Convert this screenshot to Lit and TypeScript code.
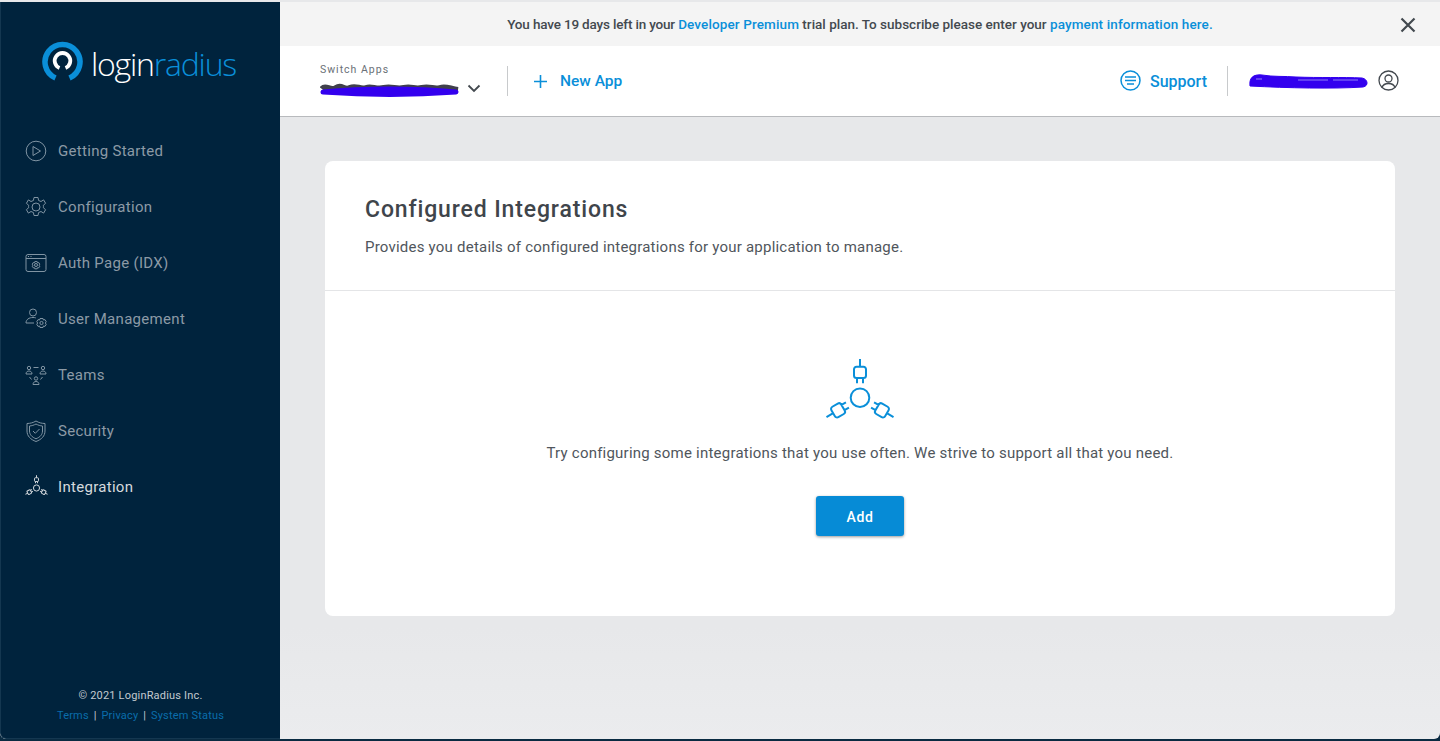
import { LitElement, html, css, svg } from "lit";
import { customElement } from "lit/decorators.js";

const plug = svg`<path d="M0-38.700V-31M-3.500-31h7a2.500 2.500 0 0 1 2.500 2.500v6.300a2.500 2.500 0 0 1-2.500 2.500h-7a2.500 2.500 0 0 1-2.500-2.500v-6.300a2.500 2.500 0 0 1 2.500-2.500zM-3-19.700v5.200M3-19.700v5.200"/>`;

const plugGroup = svg`
  <circle r="9.300"/>
  ${plug}
  <g transform="rotate(120)">${plug}</g>
  <g transform="rotate(240)">${plug}</g>
`;

const navIcons = {
  play: svg`<circle cx="11" cy="11" r="9.8"/><path d="M8 6.500v9l7.500-4.500z"/>`,
  gear: svg`<circle cx="11" cy="11" r="4"/><path d="M9 1.500h4l.6 3 2.400 1 2.600-1.600 2 3.400-2.300 2c.2.900.2 1.600 0 2.400l2.300 2-2 3.400-2.600-1.600-2.400 1-.6 3H9l-.6-3-2.400-1-2.600 1.600-2-3.400 2.300-2c-.2-.8-.2-1.500 0-2.400l-2.300-2 2-3.400L6 5.500l2.400-1z"/>`,
  auth: svg`<rect x="1" y="2.500" width="20" height="17" rx="2"/><path d="M1 6.500h20M3 4.500h1M5.500 4.500h1"/><circle cx="11" cy="13" r="1.500"/><path d="M9.800 9.600h2.400l.4 1.200 1.200-.2 1 1.600-.8 1 .8 1-1 1.600-1.200-.2-.4 1.200H9.800l-.4-1.200-1.200.2-1-1.600.8-1-.8-1 1-1.600 1.200.2z"/>`,
  user: svg`<circle cx="8" cy="4.500" r="3.500"/><path d="M1 15c0-3.500 3-5.500 7-5.500 1 0 2 .1 2.800.4M1 15h8"/><circle cx="16.500" cy="15" r="1.600"/><path d="M15 10.500h3l.4 1.500 1.600-.4 1.300 2.200-1.100 1.200 1.100 1.200-1.300 2.200-1.600-.4-.4 1.500h-3l-.4-1.500-1.600.4-1.300-2.200 1.100-1.200-1.100-1.200 1.300-2.200 1.600.4z"/>`,
  teams: svg`<circle cx="4" cy="4" r="1.700"/><path d="M1 10c0-2 1.300-3 3-3s3 1 3 3z"/><circle cx="18" cy="4" r="1.700"/><path d="M15 10c0-2 1.300-3 3-3s3 1 3 3z"/><circle cx="11" cy="14.500" r="1.700"/><path d="M8 20.500c0-2 1.300-3 3-3s3 1 3 3zM8.500 3.500h5M4.500 13l2 2.500M17.500 13l-2 2.500"/>`,
  shield: svg`<path d="M11 1c3 1.800 5.500 2.400 9 2.500V11c0 5-3.500 8.500-9 10.500C5.500 19.500 2 16 2 11V3.500C5.500 3.400 8 2.800 11 1z"/><path d="M11 4c2.200 1.200 4.200 1.800 6.500 2v5c0 3.600-2.500 6.200-6.500 7.800C7 17.200 4.500 14.600 4.500 11V6C6.800 5.800 8.800 5.200 11 4z"/><path d="M8 11l2.300 2.300L14.500 9"/>`,
  integration: svg`<g transform="translate(11.500 12) scale(.33)" stroke-width="3">${plugGroup}</g>`,
};

const navItems = [
  { label: "Getting Started", icon: navIcons.play },
  { label: "Configuration", icon: navIcons.gear },
  { label: "Auth Page (IDX)", icon: navIcons.auth },
  { label: "User Management", icon: navIcons.user },
  { label: "Teams", icon: navIcons.teams },
  { label: "Security", icon: navIcons.shield },
  { label: "Integration", icon: navIcons.integration, active: true },
];

@customElement("app-root")
export class AppRoot extends LitElement {
  static styles = css`
    :host {
      display: block;
      width: 1440px;
      height: 741px;
      overflow: hidden;
      background: #0a2b42;
      font-family: Roboto, "Liberation Sans", sans-serif;
      color: #3f454b;
    }
    .window {
      display: flex;
      height: 739px;
      overflow: hidden;
      background: linear-gradient(#e7e8ea 85%, #ebecee);
      border-radius: 0 0 6px 6px;
    }
    .sidebar {
      width: 280px;
      flex: none;
      box-sizing: border-box;
      margin-top: 2px;
      background: #00233d;
      border-left: 1px solid #143750;
      border-bottom: 1px solid #143750;
      border-bottom-left-radius: 6px;
      display: flex;
      flex-direction: column;
    }
    .logo {
      display: flex;
      align-items: center;
      height: 62px;
      margin: 29px 0 0 40px;
      gap: 7px;
    }
    .logo-text {
      padding-top: 3px;
      font-family: "Open Sans", sans-serif;
      font-weight: 300;
      font-size: 32px;
      letter-spacing: -1.2px;
      line-height: 40px;
      color: #fff;
    }
    .logo-text span {
      color: #0a8fd9;
    }
    nav {
      display: flex;
      flex-direction: column;
      margin-top: 30px;
    }
    .nav-item {
      height: 56px;
      display: flex;
      align-items: center;
      padding-left: 24px;
      gap: 11px;
      font-size: 15px;
      letter-spacing: 0.3px;
      color: #8c9aa6;
    }
    .nav-item svg {
      width: 22px;
      height: 22px;
      fill: none;
      stroke: #8094a3;
      stroke-width: 1;
      flex: none;
      overflow: visible;
    }
    .nav-item.active {
      color: #d5dade;
    }
    .nav-item.active svg {
      stroke: #d5dade;
    }
    .foot {
      margin-top: auto;
      padding-bottom: 12px;
      text-align: center;
      font-size: 11px;
      letter-spacing: 0.18px;
      line-height: 20px;
      color: #c3cad0;
    }
    .foot a {
      color: #0a6dab;
    }
    .foot i {
      font-style: normal;
      margin: 0 2px;
    }
    .main {
      flex: 1;
      min-width: 0;
      display: flex;
      flex-direction: column;
    }
    .banner {
      height: 44px;
      margin-top: 2px;
      background: #f4f4f4;
      display: flex;
      align-items: center;
      justify-content: center;
      position: relative;
      font-size: 13.500px;
      font-weight: 500;
      color: #43494f;
    }
    .banner b {
      font-weight: 500;
      letter-spacing: 0.12px;
      color: #0a8fd9;
      white-space: pre;
    }
    .banner span {
      white-space: pre;
    }
    .banner .lead {
      letter-spacing: -0.17px;
    }
    .close {
      position: absolute;
      right: 24px;
      top: 15px;
      width: 16px;
      height: 16px;
      fill: none;
      stroke: #43494f;
      stroke-width: 2.200;
    }
    header {
      height: 70px;
      background: #fff;
      border-bottom: 1px solid #b8babd;
      display: flex;
      align-items: center;
      padding: 0 41px 0 40px;
    }
    .switch {
      width: 187px;
      margin-top: -1px;
      line-height: 12px;
      font-size: 10.500px;
      letter-spacing: 1px;
      color: #6a7076;
      position: relative;
    }
    .switch .scribble {
      display: block;
      width: 140px;
      height: 15px;
      margin-top: 6px;
    }
    .chev {
      position: absolute;
      right: 26px;
      bottom: 4px;
      width: 14px;
      height: 9px;
      fill: none;
      stroke: #43494f;
      stroke-width: 1.800;
    }
    .sep {
      width: 1px;
      height: 30px;
      background: #c8cacc;
    }
    .new-app {
      display: flex;
      align-items: center;
      margin-left: 25px;
      gap: 12px;
      font-size: 15.500px;
      font-weight: 500;
      color: #0a8fd9;
    }
    .new-app svg {
      width: 15px;
      height: 15px;
      stroke: #0a8fd9;
      stroke-width: 1.600;
      fill: none;
    }
    .right {
      margin-left: auto;
      display: flex;
      align-items: center;
    }
    .support {
      display: flex;
      align-items: center;
      gap: 9px;
      font-size: 16px;
      font-weight: 500;
      color: #0a8fd9;
      margin-right: 20px;
    }
    .support svg {
      width: 21px;
      height: 21px;
      margin-top: -2px;
      fill: none;
      stroke: #0a8fd9;
      stroke-width: 1.500;
    }
    .account {
      width: 122px;
      height: 18px;
      margin-left: 20px;
      margin-right: 8px;
      display: block;
    }
    .avatar {
      width: 21px;
      height: 21px;
      margin-top: -2px;
      fill: none;
      stroke: #43494f;
      stroke-width: 1.300;
    }
    .content {
      flex: 1;
      padding: 44px 45px;
    }
    .card {
      height: 455px;
      background: #fff;
      border-radius: 8px;
      display: flex;
      flex-direction: column;
    }
    .card-head {
      height: 130px;
      box-sizing: border-box;
      border-bottom: 1px solid #e4e5e7;
      padding: 33px 40px 0;
    }
    h1 {
      margin: 0;
      font-size: 23px;
      font-weight: 500;
      letter-spacing: 0.87px;
      line-height: 32px;
      color: #3f454b;
    }
    .card-head p {
      margin: 11px 0 0;
      font-size: 15px;
      letter-spacing: 0.22px;
      line-height: 20px;
      color: #50565c;
    }
    .empty {
      display: flex;
      flex-direction: column;
      align-items: center;
      padding-top: 67px;
    }
    .empty svg {
      width: 70px;
      height: 62px;
      fill: none;
      stroke: #0a8fd9;
      stroke-width: 2;
    }
    .empty p {
      margin: 23px 0 0;
      font-size: 15px;
      letter-spacing: 0.22px;
      line-height: 20px;
      color: #50565c;
    }
    button {
      margin-top: 33px;
      width: 88px;
      height: 40px;
      padding: 2px 0 0;
      border: 0;
      border-radius: 3px;
      background: #068bd6;
      color: #fff;
      font: 500 14px Roboto, sans-serif;
      letter-spacing: 0.6px;
      box-shadow: 0 1px 3px rgba(0, 0, 0, 0.4);
    }
  `;

  render() {
    return html`
      <div class="window">
        <aside class="sidebar">
          <div class="logo">
            <svg width="43" height="42" viewBox="0 0 43 42" fill="none">
              <path d="M14.500 37A17.500 17.500 0 1 1 28.500 37" stroke="#0a8fd9" stroke-width="5.500"/>
              <path d="M18.500 27A7.800 7.800 0 1 1 24.500 27" stroke="#fff" stroke-width="3.800"/>
            </svg>
            <div class="logo-text">login<span>radius</span></div>
          </div>
          <nav>
            ${navItems.map(
              (item) => html`
                <div class="nav-item ${item.active ? "active" : ""}">
                  <svg viewBox="0 0 22 22">${item.icon}</svg>
                  <span>${item.label}</span>
                </div>
              `
            )}
          </nav>
          <div class="foot">
            <div>© 2021 LoginRadius Inc.</div>
            <div><a>Terms</a> <i>|</i> <a>Privacy</a> <i>|</i> <a>System Status</a></div>
          </div>
        </aside>
        <div class="main">
          <div class="banner">
            <span class="lead">You have 19 days left in your </span><b>Developer Premium</b><span> trial plan. To subscribe please enter your </span><b>payment information here.</b>
            <svg class="close" viewBox="0 0 16 16"><path d="M1.500 1.500l13 13M14.500 1.500l-13 13"/></svg>
          </div>
          <header>
            <div class="switch">
              Switch Apps
              <svg class="scribble" viewBox="0 0 140 15">
                <path d="M2 7c4-5 8 3 14-1s8 3 14 0 10 2 16 0 10 2 18 0 12 2 20 0 10 2 18 0 12 2 18 0 10 1 18 2" fill="none" stroke="#40404c" stroke-width="6"/>
                <path d="M3 10c40-4 92-4 133 0-40 3-92 3-133 0z" fill="#3300ee" stroke="#3300ee" stroke-width="5" stroke-linejoin="round"/>
              </svg>
              <svg class="chev" viewBox="0 0 14 9"><path d="M1.500 1.500L7 7l5.500-5.500"/></svg>
            </div>
            <div class="sep"></div>
            <div class="new-app">
              <svg viewBox="0 0 15 15"><path d="M7.500 1v13M1 7.500h13"/></svg>
              New App
            </div>
            <div class="right">
              <div class="support">
                <svg viewBox="0 0 21 21"><circle cx="10.500" cy="10.500" r="9.500"/><path d="M5 7h11M5 10.500h11M7 14h7"/></svg>
                Support
              </div>
              <div class="sep"></div>
              <svg class="account" viewBox="0 0 122 18">
                <path d="M2 14c-1-8 3-12 12-11 12 2 22 1 34 2 24 1 46 0 66 1 6 1 7 8 1 9-30 2-75 1-113-1z" fill="#3300ee" stroke="#3300ee" stroke-width="1"/>
                <path d="M8 7h6M50 8h30M85 8h25" stroke="#8f80f5" stroke-width="1"/>
              </svg>
              <svg class="avatar" viewBox="0 0 21 21"><circle cx="10.500" cy="10.500" r="9.500"/><circle cx="10.500" cy="8.500" r="3.500"/><path d="M4 17.500c1-3 3.500-4 6.500-4s5.500 1 6.500 4"/></svg>
            </div>
          </header>
          <div class="content">
            <section class="card">
              <div class="card-head">
                <h1>Configured Integrations</h1>
                <p>Provides you details of configured integrations for your application to manage.</p>
              </div>
              <div class="empty">
                <svg viewBox="-35 -39.700 70 62">${plugGroup}</svg>
                <p>Try configuring some integrations that you use often. We strive to support all that you need.</p>
                <button>Add</button>
              </div>
            </section>
          </div>
        </div>
      </div>
    `;
  }
}
